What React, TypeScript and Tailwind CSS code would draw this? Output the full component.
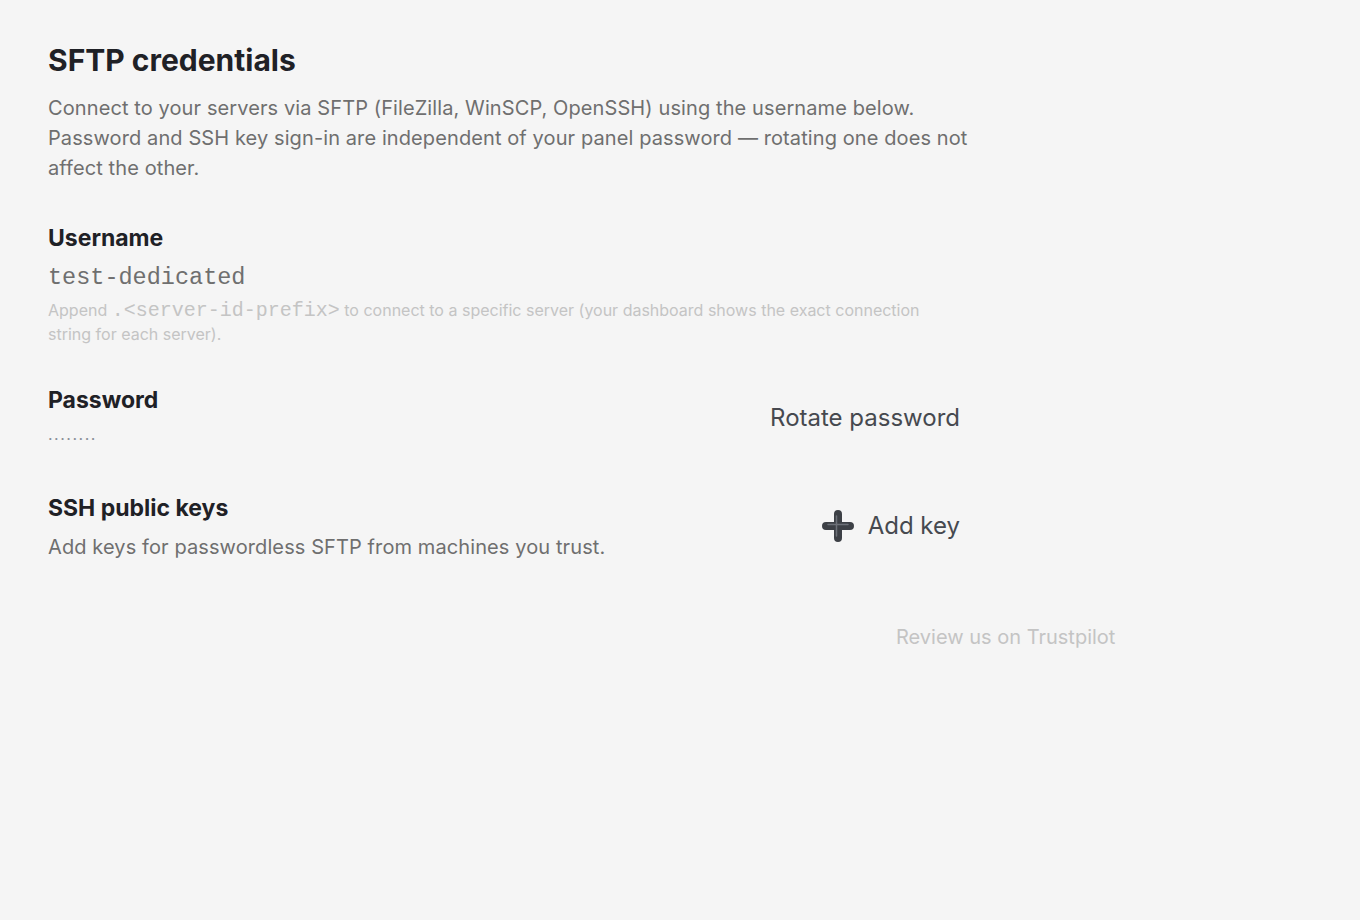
import React from "react";

const PlusIcon = () => (
  <svg width="32" height="32" viewBox="0 0 32 32" fill="none">
    <path d="M16 4v24M4 16h24" stroke="#3d4046" strokeWidth="8" strokeLinecap="round" />
    <path d="M14.5 6v20M6 14.5h20" stroke="#6d7078" strokeWidth="1.5" strokeLinecap="round" />
  </svg>
);

const App = () => {
  return (
    <div className="min-h-[920px] w-full bg-[#f5f5f5] font-['Inter',sans-serif]">
      <div className="pl-12 pt-[42px] w-[960px]">
        <h1 className="text-[30px] font-bold leading-9 text-[#1f2126]">SFTP credentials</h1>
        <p className="mt-[15px] w-[945px] text-[20px] leading-[30px] tracking-[0.1px] text-[#6f6f6f]">
          Connect to your servers via SFTP (FileZilla, WinSCP, OpenSSH) using the username below.
          Password and SSH key sign-in are independent of your panel password — rotating one does
          not affect the other.
        </p>

        <section className="mt-[40px]">
          <h2 className="text-[23px] font-bold leading-[30px] text-[#1f2126]">Username</h2>
          <div className="mt-[9px] font-['Liberation_Mono',monospace] text-[23.5px] leading-8 text-[#6f6f6f]">
            test-dedicated
          </div>
          <p className="mt-[4px] w-[910px] text-[16px] leading-6 text-[#c4c4c4]">
            Append{" "}
            <code className="font-['Liberation_Mono',monospace] text-[20px] leading-none">
              .&lt;server-id-prefix&gt;
            </code>{" "}
            to connect to a specific server (your dashboard shows the exact connection string for
            each server).
          </p>
        </section>

        <section className="mt-[39px] flex items-start justify-between">
          <div>
            <h2 className="text-[23px] font-bold leading-[30px] text-[#1f2126]">Password</h2>
            <div className="mt-[14px] text-[16px] leading-5 tracking-[1.5px] text-[#8a8f98]">········</div>
          </div>
          <button className="mt-[17px] text-[24px] leading-8 text-[#46494f]">Rotate password</button>
        </section>

        <section className="mt-[44px] flex items-start justify-between">
          <div>
            <h2 className="text-[23px] font-bold leading-[30px] text-[#1f2126]">SSH public keys</h2>
            <p className="mt-[10px] text-[20px] leading-7 tracking-[0.1px] text-[#6f6f6f]">
              Add keys for passwordless SFTP from machines you trust.
            </p>
          </div>
          <button className="mt-[17px] flex items-center gap-[14px] text-[24px] leading-8 text-[#46494f]">
            <PlusIcon />
            Add key
          </button>
        </section>
      </div>

      <div className="mt-[62px] pl-[896px]">
        <a className="text-[20px] leading-7 text-[#c4c4c4]">Review us on Trustpilot</a>
      </div>
    </div>
  );
};

export default App;
